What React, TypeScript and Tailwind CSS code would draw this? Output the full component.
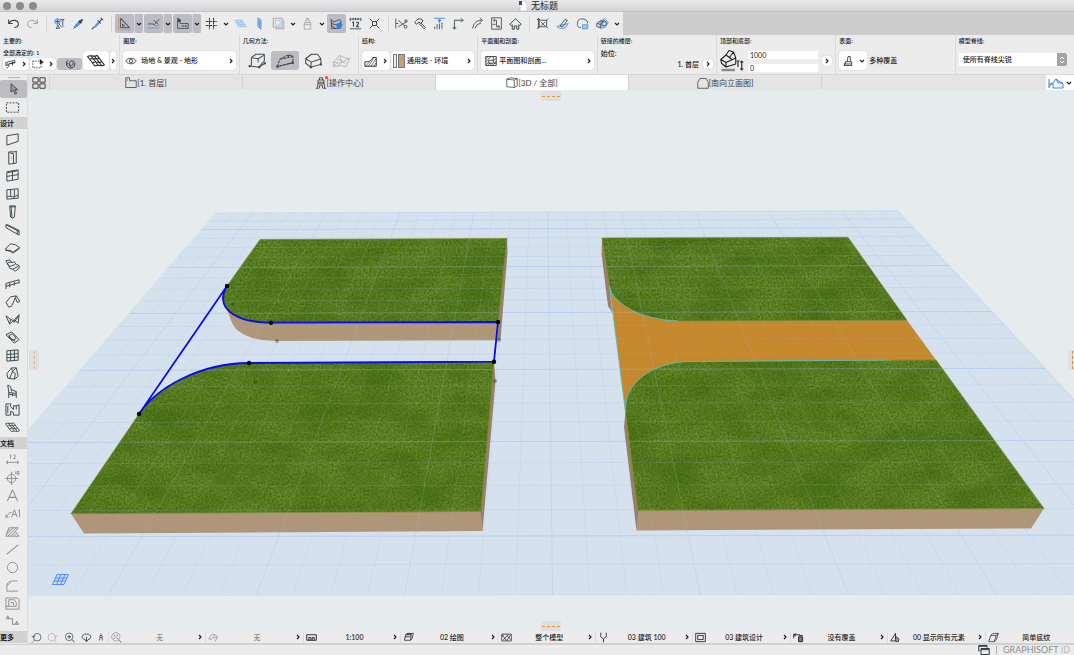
import React from "react";
import clsx from "clsx";

// Toolbar drawings, all on a 16x16 grid
const BLUE = "#4a90e2";

const ICONS: Record<string, React.ReactNode> = {
  undo: <path d="M2 3v5h5M2.500 7.500C5 3 13 3 14 8c.5 3-2 5-5 5" strokeWidth="1.300" />,
  redo: <path d="M14 3v5H9M13.500 7.500C11 3 3 3 2 8c-.5 3 2 5 5 5" strokeWidth="1.200" />,
  find: (
    <>
      <circle cx="5.500" cy="5.500" r="3.500" stroke={BLUE} fill="#b9d5f6" />
      <path d="M3 5.500h5M5.500 3v5M7 8l4 5M4 14l2-4 2 4zM9 3h5M12 3v8" />
      <path d="M12 12h2M10 5h3" stroke={BLUE} />
    </>
  ),
  dropper: (
    <>
      <path d="M3 13l1-3 5-5 2 2-5 5z" stroke={BLUE} fill={BLUE} />
      <path d="M8.500 4.500l3 3M10 6l3-3" strokeWidth="2.600" />
      <path d="M1.500 14.500l2-2" />
    </>
  ),
  syringe: (
    <>
      <path d="M3.500 12.500l5-6 1.500 1.500-5 5z" stroke={BLUE} fill={BLUE} />
      <path d="M8 4l4 4M9.500 7l4-4.500M12 1l3 3M1 15l2.500-2.500" strokeWidth="1.300" />
    </>
  ),
  guide: (
    <>
      <path d="M3 2v11h11z" />
      <path d="M5.500 8.500V11h2.500zM3 1l11 12" />
      <path d="M.8 1v14" stroke="#e3873c" strokeDasharray="2 1" />
      <path d="M2 15.300h13" stroke="#e3873c" />
    </>
  ),
  snapLine: (
    <>
      <path d="M1 8.500h6l2 1 6-7M8 4l6 5" />
      <path d="M1 13.500h14M10 10.500h5" stroke={BLUE} strokeDasharray="3 1" />
    </>
  ),
  ruler: (
    <>
      <path d="M2 1v13h13V8H5V5H2" />
      <path d="M3 2l3 2-3 2z" fill="currentColor" />
      <path d="M7 11h1M9 11h1M11 11h2" strokeWidth="2" />
    </>
  ),
  grid: <path d="M5.500 1v14M10.500 1v14M1 5.500h14M1 10.500h14" strokeWidth="1.300" strokeDasharray="3.500 .8" />,
  plane: (
    <g stroke="#7fb1ea" strokeWidth="0.800">
      <path d="M1 4h9l5 8H6z" fill="#dde9f8" />
      <path d="M4 4l5 8M7 4l5 8M3 7h9M4.500 9.500h9" />
    </g>
  ),
  planeV: (
    <g stroke={BLUE} strokeWidth="0.900">
      <path d="M6 1l4 3v11l-4-3z" fill="#a9cbf4" />
      <path d="M8 2.500v11M6 5l4 3M6 8l4 3" />
    </g>
  ),
  layers: (
    <>
      <path d="M1.500 1.500h11v11h-11z" />
      <path d="M4 14.500h10.500V4" />
      <path d="M4 4h6v6H4z" stroke="#9cc3ee" />
    </>
  ),
  lock: <path d="M4 7h8v8H4zM6 7V3.500h4V7M4 9.500h8M6 2h4" />,
  pick: (
    <>
      <path d="M1 3l4 3 7-3 2 3-6 4-6-2zM1 10l5 4h6M2 6v7M1 14h6" />
      <path d="M8 9l5-2 2 2-2 5-4-1z" fill="#2f7ff0" stroke="#2f7ff0" />
    </>
  ),
  measure: (
    <>
      <path d="M1 2.500h14M1.500 1v4M14.500 1v4M5 1v3M8 1v3M11 1v3M1 14.500h14" />
      <path d="M4 7l1.500-1v6M9 7.500c1-2 3.500-1 2.500 1L9 12h3.500" strokeWidth="1.300" />
    </>
  ),
  cross: <path d="M2 2l3.500 3.500M14 2l-3.500 3.500M2 14l3.500-3.500M14 14l-3.500-3.500M5.500 5.500h5v5h-5z" strokeWidth="1.200" />,
  scissors: (
    <>
      <path d="M1 2v12M1 8h3M4 4l8 7M4 12l10-6" />
      <circle cx="13" cy="12" r="1.800" />
      <circle cx="13.500" cy="5" r="1.500" />
    </>
  ),
  hammer: <path d="M1 7c2-4 5-6 9-4l1 2-3 3-2-2-3 3zM8 7l6 6-1.500 1.500L6 8" strokeWidth="1.200" />,
  height: (
    <>
      <path d="M1 1.500h14M8 3v5M6 5l2-2 2 2" stroke={BLUE} strokeWidth="1.400" />
      <path d="M5 9v6M8 9v6M11 7v8M2 12v3" strokeDasharray="1.800 .6" strokeWidth="1.300" />
    </>
  ),
  corner: <path d="M3 15V4h11M11 1.500L13.500 4 11 6.500M1 12.500L3 15l2-2.500" strokeWidth="1.100" />,
  fillet: <path d="M2 14C3 8 7 4 13 4M11 1l3 3-3 3M5 14c1-3 3-6 7-6" strokeWidth="1.100" />,
  stretch: <path d="M2 1h12v14H2zM5 4h3M5 2v4M8 4v8M8 12h4M10 10l2 2-2 2M3 9h4" />,
  roof: <path d="M1 9l7-7 7 7-2 1.500-1-1V15H9.500v-4h-3v4H4V9.500l-1 1z" strokeWidth="1.200" />,
  group: <path d="M4 4h9v8H4zM1 3h4M1 14l4-2M15 2l-3 3M15 14l-3-3M6 6l5 5M11 6l-5 5M3 1v13" />,
  paint: (
    <>
      <path d="M1 12c4-3 9-2 14-4l-3 5c-4 2-8 1-11-1z" stroke={BLUE} fill="#c7ddf7" />
      <path d="M5 11l6-8 3 1-6 8z" />
    </>
  ),
  cloud: (
    <>
      <path d="M6 13c-4 0-5-3-4-5-1-5 5-7 8-5 3 0 5 3 4 5" />
      <path d="M8 9.500h6.500v5H8z" stroke={BLUE} fill="#9fc6f5" />
    </>
  ),
  wheel: (
    <>
      <path d="M5 5l6-3 4 5-4 6-6 1z" stroke={BLUE} fill="#b9d5f6" />
      <circle cx="10" cy="8" r="3" />
      <path d="M1 8l4-3h5M1 8v4l5 1V9L1 8M6 9l3-3" />
    </>
  ),
  // info box
  wallTool: <path d="M1 6l12-3v3L5 8v4M1 6v4h2V7M5 8l9-2M10 5v5M2 13h2" />,
  select: (
    <>
      <path d="M1 4h11v9H1z" strokeDasharray="2 1.500" />
      <path d="M11 2v6l1.500-1.500L15 6z" fill="currentColor" />
    </>
  ),
  magnet: <path d="M5 3C0 9 6 15 11 13c5-2 4-9 0-9-4-1-5 5-2 6s4-3 2-4M6 9l4 4M3 6l3 2" />,
  mesh: (
    <g strokeWidth="0.900">
      <path d="M.5 4C4 2 6 5 9 3l6.500 8.500c-3 2-5-1-8.500 1z" />
      <path d="M3.500 3.300l6.500 8.500M6.500 3.600L13 12M2.500 6.500c3.500-2 5.500 1 8.500-1M4.800 9.500c3.500-2 5.500 1 8.500-1" />
    </g>
  ),
  eye: (
    <>
      <path d="M1 8c3-5 11-5 14 0-3 5-11 5-14 0z" />
      <circle cx="8" cy="8" r="2.300" />
    </>
  ),
  geo1: (
    <g strokeWidth="0.900">
      <path d="M3 5l4-3h7.500v6L10 13M3 5v7M3 5l6 1 5-3M9 6v3" />
      <path d="M1 12.500l9 1 5-3.500" />
      <path d="M1 12h1v1H1zM9.500 13h1v1h-1zM14.500 9.500h1v1h-1z" fill="currentColor" />
    </g>
  ),
  geo2: (
    <g strokeWidth="0.900">
      <path d="M1 13L3.500 6.500 11 2.500l4 1v6zM3.500 6.500L15 4M11 2.500v3" strokeDasharray="2.500 .7" />
      <path d="M1 13L15 9.500" />
      <path d="M.8 12.500h1v1h-1zM14.500 9h1v1h-1z" fill="currentColor" />
    </g>
  ),
  geo3: (
    <g strokeWidth="0.900">
      <path d="M1.500 6l5-4H12l3 4v5l-9 2.500L1.500 10zM1.500 6l5 3L15 6M6.500 9L6 13.500" />
      <path d="M5.500 13h1v1h-1zM14.500 10.500h1v1h-1z" fill="currentColor" />
    </g>
  ),
  geo4: <path d="M1 9l6-6 4 2 4.500 1-3 7-6-1-5 1zM1 9l6 1 8-4M7 10l-1 3M4 6l8 4M7 3l2 7M1 13l4-4" strokeWidth="0.800" />,
  section: (
    <>
      <path d="M1 14V9c4 0 8-1 9-5h4v10z" />
      <path d="M2 14l4-5M5 14l6-9M8 14l6-9M11 14l3-4" strokeWidth="0.700" />
    </>
  ),
  plan: <path d="M1 2h14v12H1zM1 5l3-3M1 9l7-7M1 13l4-4M5 7h6v4H5zM11 2v5M15 4l-4 4M15 8l-5 6M3 14l4-4M8 11v3M12 11h3" />,
  storey: (
    <g strokeWidth="0.700">
      <path d="M.5 7L4 4l2-3 3 1 1.500 4v4L4 12 1 9.500zM.5 7L4 9l6.500-3M4 9v3M4 4l4 3M9 2L6 6" />
      <path d="M1 14h9" stroke="#8a8a8a" strokeWidth="1.600" />
      <path d="M14.500 8v6M13.500 9l1-1 1 1M13.500 13l1 1 1-1M12 8v4M11 8h2" />
    </g>
  ),
  brush: <path d="M3 14h10V9H5zM3 14l2-5M5 12h8M7 9l1-7h3v7" />,
  // tabs
  tabs: <path d="M1 2h6v5H1zM9 2h6v5H9zM1 9h6v5H1zM9 9h6v5H9z" strokeWidth="1.100" />,
  folder: <path d="M1 14V1h5v4h9v9zM3 5V3" />,
  tower: <path d="M3 15l1-8h8l1 8M4 7V4h8v3M6 4V1h4v3M6 15v-4h4v4M4 9h8M1 15h4M11 15h4" strokeWidth="1.100" />,
  cube: <path d="M1 3l5-2 9 1v10l-4 2-10-1zM1 3l10 1 4-2M11 4v10" />,
  elevation: <path d="M1 7l3-5h8l3 5v8H1z" />,
  home: <path d="M1 4v9M1 9h3l4-5 7 5v4H5M8 4l2 4M1 12l3-4M5 13V8M10 8h5" stroke="#2f7ff0" />,
  // toolbox
  marquee: <path d="M1.500 3h13v10h-13z" strokeDasharray="2 1.300" />,
  wall: <path d="M2 4l12-2v8L2 14z" />,
  door: <path d="M4 2h7l1-1v13l-7 1H4zM5 3l4 1v10M6 8.500h1" />,
  window: <path d="M2 4l12-2v10L2 14zM8 3v10M2 9l12-2M3 5l10-2" />,
  opening: <path d="M2 4l12-1v10L2 14zM6 4v7l4 1V4M2 11h4M10 11l4-1" />,
  column: <path d="M5 2h6l-1 12-2 1-2-1zM5 3h6M6.500 3l1 12" />,
  beam: <path d="M1 3l14 7v4L1 6zM1 3l2 0 12 6v1M13 13V9" />,
  slab: <path d="M1 9l5-5 5 1 4.500 3-7 5-3-2-4.500 0zM1 9v2l4.500 1 3 2 7-5" />,
  stair: <path d="M1 3l4-1 2 3 3-1 2 3 3 1v3l-4 3-3-2-3-1-1-3zM3 5l4-1M5 9l6-2M8 12l6-3M2 6l3 3" />,
  railing: <path d="M1 14V8l14-4v4M1 11l14-4M5 7v5M10 6v4" />,
  roofTool: <path d="M1 9l5-6 6-1 4 6-3 1-2-5-4 9-3 1zM12 2l-1 3" />,
  shell: <path d="M1 4l5 4 3 1 6-6-1 9-3-3-3 1-3 3zM6 8l-1 4M9 9l1 2 5-8" />,
  skylight: <path d="M1 5l6-3 8 8-5 4zM4 6l4-2 4 5-4 2zM3 7l8 5" />,
  curtain: <path d="M2 3l12-1v11L2 14zM6 3v11M10 2v12M2 7l12-1M2 10.500l12-1" />,
  morph: <path d="M2 8l5-6 5 0 2 9-4 3-7-1zM7 2L8 6l3 2-1 6M12 2l-4 4M8 6L5 13" />,
  chair: <path d="M3 1l1 8 8 1V8L7 6M3 1l3 2 1 5M4 9v6M12 10v5M8 10v3M4 11l8 1" />,
  zone: <path d="M1 2h5v3l3 3V4h3l3-1v11H9v-3l-3-1v4H1zM3 4v8M12 4v4" />,
  dim: <path d="M1 11h14M2.500 9v4M13.500 9v4M5 3.500l1-.5v4M9 3.500c1-1 3 0 2 1.500L9 7h2.500" />,
  level: (
    <>
      <circle cx="7" cy="9" r="4.500" />
      <path d="M0 9h14M7 2v14M11.500 1.500v3M13 1.500h2v3h-2z" />
    </>
  ),
  letter: <path d="M2.500 14L8 2l5.500 12M4.500 10h7" strokeWidth="1.200" />,
  label: <path d="M1 12l4-5h2M1 9v3h3M7 12l3-8 3 8M8 9h4M14 5l1.500-1v8" />,
  hatch: (
    <>
      <path d="M1 13l3-9h10l-3 4 4 5z" />
      <path d="M2 11l7-7M3 13l9-9M6 13l5-5M9 13l3-3M2 9l4-4" />
    </>
  ),
  line: <path d="M2 13L14 3" strokeWidth="1.200" />,
  circle: <circle cx="8" cy="8" r="5.500" />,
  arc: <path d="M2 14V8c0-4 4-5 11-5M2 14h12M2 8l4-3" />,
  drawing: <path d="M1 2h12l2 2v10H1zM4 4h6l2 3v4H4zM6 7h3v3M1 11h3" />,
  worksheet: <path d="M1 5h7v6h7M1.500 5L3 2l1.500 3M11 11l1.500-3 1.500 3" strokeWidth="1.100" />,
  // status bar
  zoomPrev: (
    <>
      <circle cx="9" cy="7.500" r="5.500" />
      <path d="M5 12l-3 3M1 6l3 2 2-3" />
    </>
  ),
  zoomNext: (
    <>
      <circle cx="7" cy="7.500" r="5.500" />
      <path d="M11 12l3 3M10 6l3 2 2-3" />
    </>
  ),
  zoomIn: (
    <>
      <circle cx="7.500" cy="7" r="5.500" />
      <path d="M12 11l3 4M7.500 4.500v5M5 7h5" strokeWidth="1.300" />
    </>
  ),
  orbit: <path d="M6 11C0 10 0 3 8 3s8 7 2 8M8 7v7M5.500 11L8 14l2.500-3" strokeWidth="1.300" />,
  walk: <path d="M8 1v3M5 9l1-4h4l1 4M6 9h4M6 9l-1 6M10 9l1 6" strokeWidth="1.600" />,
  fit: (
    <>
      <circle cx="7" cy="7" r="6" />
      <path d="M11 11l4 4M4 4l2 2M10 4L8 6M4 10l2-2M10 10L8 8" strokeWidth="1.500" />
    </>
  ),
  angle: <path d="M1 10l5-7 4 1-5 7zM8 9l6-2-4 7M10 4l4 3" />,
  scale: <path d="M1 4h14v8H1zM4 12V8h3v4M9 12V8h3v4" strokeWidth="1.300" />,
  stack: <path d="M4 4l2-2h9l-2 8-2 2H2zM4 4h8l-1 8M3 7h8M5 3h8" strokeWidth="1.100" />,
  texture: <path d="M1 3h14v10H1zM1 7l4-4M3 12l8-9M8 13l6-9M2 5l6 7M8 4l6 7" />,
  pen: <path d="M4 1v6l4 3 4-3V1M8 10v5" strokeWidth="1.200" />,
  frame: <path d="M1 2h14v12H1zM4 5h8v6H4z" strokeWidth="1.200" />,
  override: <path d="M1 9V4h9M4 2L1 4l3 2M8 7h6v7H8zM10 7v7M12 7v7M9 5h5" strokeWidth="1.300" />,
  reno: <path d="M1 13L8 2v11zM8 6l5 4-1 4H8M10 8v5" strokeWidth="1.200" />,
  solid: <path d="M4 5l3-3h8l-3 9-3 3H1zM4 5h8l-3 9M12 5l3-3" />,
  windows: <path d="M1 2h11v3M1 2v7h2M4 6h11v8H4zM1 3h11M4 7.500h11" strokeWidth="1.300" />,
};

type IconProps = { name: string; className?: string };

const Icon = ({ name, className = "size-4" }: IconProps) => (
  <svg
    viewBox="0 0 16 16"
    fill="none"
    stroke="currentColor"
    strokeLinejoin="round"
    className={clsx("shrink-0", className)}
    aria-hidden="true"
  >
    {ICONS[name]}
  </svg>
);

const Chevron = ({ down = false }: { down?: boolean }) => (
  <svg
    viewBox="0 0 6 6"
    fill="none"
    stroke="#222"
    strokeWidth="1.200"
    className="size-1.5 shrink-0"
    aria-hidden="true"
  >
    <path d={down ? "M1 2L3 4 5 2" : "M2 1L4 3 2 5"} />
  </svg>
);

// Main toolbar
type Tool = {
  icon: string;
  label: string;
  active?: boolean;
  menu?: boolean;
  dim?: boolean;
};

const TOOL_GROUPS: Tool[][] = [
  [
    { icon: "undo", label: "撤销" },
    { icon: "redo", label: "重做", dim: true },
  ],
  [
    { icon: "find", label: "查找和选择" },
    { icon: "dropper", label: "拾取参数" },
    { icon: "syringe", label: "注入参数" },
  ],
  [
    { icon: "guide", label: "辅助线", active: true, menu: true },
    { icon: "snapLine", label: "捕捉导线", active: true, menu: true },
    { icon: "ruler", label: "追踪器", active: true, menu: true },
    { icon: "grid", label: "网格", menu: true },
    { icon: "plane", label: "编辑平面" },
    { icon: "planeV", label: "垂直平面" },
    { icon: "layers", label: "描绘", menu: true, dim: true },
    { icon: "lock", label: "锁定", menu: true, dim: true },
    { icon: "pick", label: "编组", active: true },
    { icon: "measure", label: "测量" },
    { icon: "cross", label: "分解" },
  ],
  [
    { icon: "scissors", label: "分割" },
    { icon: "hammer", label: "调整" },
    { icon: "height", label: "标高" },
    { icon: "corner", label: "相交" },
    { icon: "fillet", label: "圆角" },
    { icon: "stretch", label: "拉伸" },
    { icon: "roof", label: "修剪到屋顶" },
  ],
  [
    { icon: "group", label: "变换" },
    { icon: "paint", label: "表面画笔" },
    { icon: "cloud", label: "点云" },
    { icon: "wheel", label: "三维样式", menu: true },
  ],
];

const Toolbar = () => (
  <div className="flex h-[23px] shrink-0 bg-[#cdcdcd]">
    <div className="flex items-center bg-[#ececec] pr-px pl-1">
      {TOOL_GROUPS.map((group, i) => (
        <React.Fragment key={group[0].icon}>
          {i > 0 && (
            <div className="flex w-2 justify-center">
              <div className="h-4 w-px bg-[#d6d6d6]" />
            </div>
          )}
          <div className={clsx("flex", i === 4 && "gap-px")}>
            {group.map((tool) => (
              <div key={tool.icon} className="flex h-[19px]">
                <button
                  aria-label={tool.label}
                  className={clsx(
                    "flex w-[19px] items-center justify-center rounded-xs",
                    tool.active && "bg-[#bcbcc2]",
                    tool.dim ? "text-[#9aa0a4]" : "text-[#36444b]",
                  )}
                >
                  <Icon name={tool.icon} className="size-[13px]" />
                </button>
                {tool.menu && (
                  <button
                    aria-label={`${tool.label}选项`}
                    className={clsx(
                      "flex w-2.5 items-center justify-center rounded-xs",
                      tool.active && "border-x border-l-[#d2d2d6] border-r-[#ececec] bg-[#bcbcc2]",
                    )}
                  >
                    <Chevron down />
                  </button>
                )}
              </div>
            ))}
          </div>
        </React.Fragment>
      ))}
    </div>
  </div>
);

// Info box
const WHITE_BTN =
  "flex items-center rounded-[3px] bg-white shadow-[0_0_1px_#9a9a9a]";

const Section = ({
  title,
  children,
}: {
  title: string;
  children: React.ReactNode;
}) => (
  <section className="flex min-w-0 flex-col border-l border-[#dadada] px-[3px] first:border-l-0">
    <h2 className="h-2.5 pt-px text-[6px] leading-[9px] font-medium">{title}</h2>
    {children}
  </section>
);

const InfoBox = () => (
  <div className="grid h-10 shrink-0 grid-cols-9 border-b border-[#d8d8d8] bg-[#ececec]">
    <Section title="主要的:">
      <p className="h-1.5 pt-1 text-[6px] leading-[7px] font-medium whitespace-nowrap">
        全部选定的: 1
      </p>
      <div className="flex items-end gap-px">
        <button aria-label="默认设置" className={clsx(WHITE_BTN, "h-3 flex-1 justify-around")}>
          <Icon name="wallTool" className="size-3" />
          <Chevron />
        </button>
        <button aria-label="选择方法" className={clsx(WHITE_BTN, "h-3 flex-1 justify-around")}>
          <Icon name="select" className="size-3" />
          <Chevron />
        </button>
        <button
          aria-label="磁性"
          className="flex h-3 flex-1 items-center justify-center rounded-[3px] bg-[#bcbcc2]"
        >
          <Icon name="magnet" className="size-3" />
        </button>
        <button aria-label="网面设置" className={clsx(WHITE_BTN, "h-[19px] flex-1 justify-center")}>
          <Icon name="mesh" className="size-[18px]" />
        </button>
        <button aria-label="收藏夹" className={clsx(WHITE_BTN, "h-[19px] w-1.5 justify-center")}>
          <Chevron />
        </button>
      </div>
    </Section>
    <Section title="图层:">
      <button className={clsx(WHITE_BTN, "mt-1.5 h-[19px] gap-1 px-0.5 text-[7px] font-medium")}>
        <Icon name="eye" className="size-3" />
        <span className="flex-1 text-left">场地 &amp; 景观 - 地形</span>
        <Chevron />
      </button>
    </Section>
    <Section title="几何方法:">
      <div className="mt-1.5 flex h-[19px] text-[#3f4a50]">
        {["geo1", "geo2", "geo3", "geo4"].map((name, i) => (
          <button
            key={name}
            aria-label={`几何方法 ${i + 1}`}
            className={clsx(
              "flex w-7 items-center justify-center rounded-[3px]",
              i === 1 && "bg-[#bcbcc2]",
              i === 3 && "text-[#b3b3b3]",
            )}
          >
            <Icon name={name} className="size-[18px]" />
          </button>
        ))}
      </div>
    </Section>
    <Section title="结构:">
      <div className="mt-1.5 flex h-[19px] gap-px">
        <button aria-label="结构类型" className={clsx(WHITE_BTN, "w-7 justify-around")}>
          <Icon name="section" className="size-3.5" />
          <Chevron />
        </button>
        <button className={clsx(WHITE_BTN, "flex-1 gap-0.5 px-0.5 text-[7px] font-medium")}>
          <span className="flex h-3.5 w-3 gap-px">
            <span className="w-1 border border-[#777] bg-[#f4efe6]" />
            <span className="flex-1 border border-[#777] bg-[#c2a078]" />
          </span>
          <span className="flex-1 text-left whitespace-nowrap">通用类 - 环境</span>
          <Chevron />
        </button>
      </div>
    </Section>
    <Section title="平面图和剖面:">
      <button className={clsx(WHITE_BTN, "mt-1.5 h-[19px] gap-0.5 pr-0.5 pl-1 text-[7px] font-medium")}>
        <Icon name="plan" className="size-3" />
        <span className="flex-1 text-left">平面图和剖面...</span>
        <Chevron />
      </button>
    </Section>
    <Section title="链接的楼层:">
      <p className="pt-1 text-[7px] leading-[8px] font-medium">始位:</p>
      <div className="mt-0.5 flex items-center justify-end gap-1 text-[7px] font-medium">
        <span>1. 首层</span>
        <button aria-label="选择楼层" className={clsx(WHITE_BTN, "size-2.5 justify-center")}>
          <Chevron />
        </button>
      </div>
    </Section>
    <Section title="顶部和底部:">
      <div className="mt-1 flex items-center gap-1">
        <Icon name="storey" className="size-6" />
        <div className="flex min-w-0 flex-1 flex-col gap-[5px]">
          <input
            aria-label="顶部高度"
            defaultValue="1000"
            className="h-2 w-full bg-white px-0.5 text-[7px] leading-[8px]"
          />
          <input
            aria-label="底部高度"
            defaultValue="0"
            className="h-2 w-full bg-white px-0.5 text-[7px] leading-[8px]"
          />
        </div>
        <button aria-label="更多高度" className={clsx(WHITE_BTN, "size-2.5 justify-center")}>
          <Chevron />
        </button>
      </div>
    </Section>
    <Section title="表面:">
      <div className="mt-1.5 flex h-[19px] items-center gap-0.5 text-[7px] font-medium">
        <button aria-label="表面覆盖" className={clsx(WHITE_BTN, "h-full w-7 justify-around")}>
          <Icon name="brush" className="size-3" />
          <Chevron down />
        </button>
        多种覆盖
      </div>
    </Section>
    <Section title="模型脊线:">
      <div className="mt-2 mr-1 flex h-[13px] items-stretch bg-white">
        <select
          aria-label="模型脊线"
          className="min-w-0 flex-1 appearance-none bg-transparent pl-1 text-[7px] leading-[13px] font-medium"
        >
          <option>使所有脊线尖锐</option>
        </select>
        <span className="flex w-2.5 items-center justify-center rounded-r-xs bg-[#a3a3a8]">
          <svg viewBox="0 0 8 10" className="h-2.5 w-2" fill="none" stroke="#fff" aria-hidden="true">
            <path d="M2 4l2-2 2 2M2 6l2 2 2-2" />
          </svg>
        </span>
      </div>
    </Section>
  </div>
);

// Left toolbox
const DESIGN_TOOLS = [
  "wall", "door", "window", "opening", "column", "beam", "slab", "stair", "railing",
  "roofTool", "shell", "skylight", "curtain", "morph", "chair", "zone", "mesh",
];

const DOC_TOOLS = [
  "dim", "level", "letter", "label", "hatch", "line", "circle", "arc", "drawing", "worksheet",
];

const ToolHeading = ({ children }: { children: React.ReactNode }) => (
  <h3 className="my-px h-3 bg-[#d2d2d2] text-[7px] leading-[12px] font-bold">{children}</h3>
);

const ToolButton = ({ name, dim }: { name: string; dim?: boolean }) => (
  <button
    aria-label={name}
    className={clsx(
      "flex h-[18px] items-center justify-center pr-0.5",
      dim ? "text-[#8b8f91]" : "text-[#36444b]",
    )}
  >
    <Icon name={name} className="size-[15px]" />
  </button>
);

const Toolbox = () => (
  <aside className="flex w-7 shrink-0 flex-col border-r border-[#dcdcdc] bg-[#ececec]">
    <div className="flex h-[5px] items-center justify-center">
      <div className="h-px w-3 bg-[#b5b5b5]" />
    </div>
    <button
      aria-label="箭头"
      className="flex h-[18px] items-center justify-center rounded-xs bg-[#bcbcc2]"
    >
      <svg viewBox="0 0 12 16" className="h-3 w-2.5" fill="#9b9b9f" stroke="#333" aria-hidden="true">
        <path d="M2 1v11l3-2.500L7.500 15l2-1L7.500 9H11z" />
      </svg>
    </button>
    <ToolButton name="marquee" />
    <ToolHeading>设计</ToolHeading>
    {DESIGN_TOOLS.map((name) => (
      <ToolButton key={name} name={name} />
    ))}
    <ToolHeading>文档</ToolHeading>
    {DOC_TOOLS.map((name) => (
      <ToolButton key={name} name={name} dim />
    ))}
    <ToolHeading>更多</ToolHeading>
  </aside>
);

// View tabs
const TABS = [
  { icon: "folder", title: "[1. 首层]" },
  { icon: "tower", title: "[操作中心]", badge: true },
  { icon: "cube", title: "[3D / 全部]", active: true },
  { icon: "elevation", title: "[南向立面图]" },
];

const TabBar = () => (
  <nav className="flex h-[15px] shrink-0 bg-[#e4e4e4] text-[8px] text-[#3c3c3c]">
    <button aria-label="标签概览" className="flex w-[21px] items-center justify-center">
      <Icon name="tabs" className="size-3.5" />
    </button>
    {TABS.map((tab) => (
      <button
        key={tab.title}
        className={clsx(
          "flex w-[193px] items-center justify-center border-l border-[#d4d4d4]",
          tab.active && "bg-white",
        )}
      >
        <span className="relative">
          <Icon name={tab.icon} className="size-3" />
          {tab.badge && (
            <span className="absolute -top-px -right-px size-[3px] rounded-full bg-[#ff3b20]" />
          )}
        </span>
        {tab.title}
      </button>
    ))}
    <div className="flex-1 border-l border-[#d4d4d4]" />
    <button aria-label="视图选项" className="flex w-7 items-center justify-center gap-0.5 bg-white">
      <Icon name="home" className="size-4" />
      <Chevron down />
    </button>
  </nav>
);

// Ground grid: lines converge at VANISH, rows are spaced by inverse depth
const VANISH = { x: 543, y: -168 };
const ROWS = 24;
const COLS = 37;
const TOP = 212;
const BOTTOM = 595;

const rowY = (k: number) => {
  const near = 1 / (TOP - VANISH.y);
  const far = 1 / (BOTTOM - VANISH.y);
  return VANISH.y + 1 / (near - ((near - far) * k) / ROWS);
};

const columnX = (k: number, y: number) => {
  const topX = 216 + (682 * k) / COLS;
  return VANISH.x + ((topX - VANISH.x) * (y - VANISH.y)) / (TOP - VANISH.y);
};

const Grid = ({ opacity = 1 }: { opacity?: number }) => (
  <g stroke="#a3c0f0" opacity={opacity}>
    {Array.from({ length: ROWS + 1 }, (_, k) => {
      const y = rowY(k);
      return (
        <line
          key={`r${k}`}
          x1={columnX(0, y)}
          y1={y + 1}
          x2={columnX(COLS, y)}
          y2={y - 1}
          strokeWidth={0.8}
          opacity={k % 4 === 2 ? 0.7 : 0.3}
        />
      );
    })}
    {Array.from({ length: COLS + 1 }, (_, k) => (
      <line
        key={`c${k}`}
        x1={columnX(k, TOP)}
        y1={TOP}
        x2={columnX(k, BOTTOM)}
        y2={BOTTOM}
        strokeWidth={0.8}
        opacity={k % 4 === 2 ? 0.45 : 0.25}
      />
    ))}
  </g>
);

const GRASS = [
  "M260 239.500L507 238.500 498.300 322 271 322.700C254 322.700 239 319 230 312 222 305 221 296 227 286z",
  "M139 414C156 388 200 363 249 363L494 361.700 481 511.500 71 513.700z",
  "M602 238L848 237.300 907 320.300 678 321C640 320 612 303 609.500 286z",
  "M690 361.500L936 360 1044 508.500 638 510.500 625.500 412C623 385 650 362 690 361.500z",
];

const SOIL = [
  "M227 309L232 323C238 335 255 341 277 341L498 340.300 498.300 321 271 322z",
  "M71 513.700L481 511.500 482.500 531 84 533.500z",
  "M638 510.500L1044 508.500 1031 528.500 636.500 530.500z",
];

const SOIL_SIDES = [
  "M507 238.500L507.500 252 500.500 340 498 340 498.300 322z",
  "M494 361.700L495.500 381 482.500 531 480.500 511.500z",
  "M602 238L601.500 254 608 306 612 312 609.500 286z",
  "M625.500 412L624 427 636.500 530.500 638.500 510.500z",
];

const NODES = [
  [227, 286], [271, 322.7], [498, 322], [494, 361.7], [249, 363], [139, 414],
];

const HIDDEN_NODES = [[277, 341], [255, 382], [233, 304], [499, 340], [495, 381]];

const Scene = () => (
  <svg
    viewBox="28 90 1046 541"
    preserveAspectRatio="xMidYMid slice"
    className="absolute inset-0 size-full"
    role="img"
    aria-label="3D 地形"
  >
    <defs>
      <filter id="grass" x="0" y="0" width="1" height="1" colorInterpolationFilters="sRGB">
        <feTurbulence type="fractalNoise" baseFrequency="0.500" numOctaves="2" seed="4" />
        <feColorMatrix
          values="0.260 0 0 0 0.220  0.260 0 0 0 0.360  0.200 0 0 0 0.030  0 0 0 0 1"
          result="blades"
        />
        <feTurbulence type="fractalNoise" baseFrequency="0.020 0.040" numOctaves="3" seed="9" />
        <feColorMatrix
          values="0 0 0 0 0.200  0 0 0 0 0.360  0 0 0 0 0.020  0.900 0 0 0 -0.300"
          result="patches"
        />
        <feMerge result="lawn">
          <feMergeNode in="blades" />
          <feMergeNode in="patches" />
        </feMerge>
        <feComposite in="lawn" in2="SourceGraphic" operator="in" />
      </filter>
      <clipPath id="solids">
        {[...GRASS, ...SOIL].map((d) => (
          <path key={d} d={d} />
        ))}
        <path d="M609.500 286L678 321 907 320.300 936 360 690 361.500 625.500 412z" />
      </clipPath>
    </defs>

    <path d="M216 213L898 210 1258 595-114 595z" fill="#d6e1ee" />
    <Grid />

    {SOIL.map((d) => (
      <path key={d} d={d} fill="#b09678" />
    ))}
    {SOIL_SIDES.map((d) => (
      <path key={d} d={d} fill="#97806a" />
    ))}
    <path
      d="M609.500 286C612 303 640 320 678 321L907 320.300 936 360 690 361.500C650 362 623 385 625.500 412z"
      fill="#c5882c"
    />
    {GRASS.map((d) => (
      <g key={d}>
        <path d={d} fill="#587c22" filter="url(#grass)" />
        <path d={d} fill="none" stroke="#7d862a" strokeWidth="0.700" />
      </g>
    ))}
    <g clipPath="url(#solids)">
      <g style={{ mixBlendMode: "multiply" }}>
        <Grid opacity={0.6} />
      </g>
    </g>
    <path
      d="M678 321C640 320 612 303 609.500 286L625.500 412C623 385 650 362 690 361.500L890 360"
      fill="none"
      stroke="#66b8ae"
    />

    {HIDDEN_NODES.map(([x, y]) => (
      <circle key={`${x}-${y}`} cx={x} cy={y} r="2" fill="#222" opacity="0.350" />
    ))}
    <path
      d="M227 286C221 296 222 305 230 312 239 319 254 322.700 271 322.700L498 322 494 361.700 249 363C200 363 156 388 139 414z"
      fill="none"
      stroke="#0a0af0"
      strokeWidth="1.800"
    />
    {NODES.map(([x, y]) => (
      <circle key={`${x}-${y}`} cx={x} cy={y} r="2.200" fill="#000" />
    ))}

    {/* edit plane marker */}
    <path
      d="M57 574.500H68.500L64 584.500H52.500zM61 574.500L56.500 584.500M65 574.500L60.500 584.500M55.500 578H67M54 581H65.500"
      fill="#c6d9fa"
      stroke="#3f78f0"
      strokeWidth="0.800"
    />
  </svg>
);

const Viewport = () => (
  <main className="relative min-h-0 flex-1 overflow-hidden bg-[#e6ebed]">
    <Scene />
    <div className="absolute top-px left-1/2 flex h-2.5 w-5 -translate-x-1/2 items-center rounded-xs bg-[#dce0e1] px-px">
      <div className="w-full border-t border-dashed border-[#f0953e]" />
    </div>
    <div className="absolute bottom-0 left-1/2 flex h-2.5 w-5 -translate-x-1/2 items-center rounded-xs bg-[#dce0e1] px-px">
      <div className="w-full border-t border-dashed border-[#f0953e]" />
    </div>
    <div className="absolute top-[260px] left-px flex h-5 w-2.5 justify-center rounded-xs bg-[#dce0e1] py-px">
      <div className="h-full border-l border-dashed border-[#f3b07a]" />
    </div>
    <div className="absolute top-[260px] right-0 flex h-5 w-1.5 justify-end rounded-l-xs bg-[#dce0e1] py-px pr-px">
      <div className="h-full border-l border-dashed border-[#f58220]" />
    </div>
  </main>
);

// Quick options at the bottom
const QUICK_OPTIONS = [
  { icon: "", text: "无", dim: true },
  { icon: "angle", text: "无", dim: true },
  { icon: "scale", text: "1:100" },
  { icon: "stack", text: "02 绘图" },
  { icon: "texture", text: "整个模型" },
  { icon: "pen", text: "03 建筑 100" },
  { icon: "frame", text: "03 建筑设计" },
  { icon: "override", text: "没有覆盖" },
  { icon: "reno", text: "00 显示所有元素" },
  { icon: "solid", text: "简单底纹" },
];

const NAV_ICONS = ["zoomPrev", "zoomNext", "zoomIn", "orbit", "walk"];

const QuickOptions = () => (
  <div className="flex h-[13px] shrink-0 overflow-hidden border-b border-[#cfcfcf] bg-[#ececec]">
    <div className="flex w-20 shrink-0 items-center justify-around">
      {NAV_ICONS.map((name) => (
        <button
          key={name}
          aria-label={name}
          className={name === "zoomNext" ? "text-[#aaa]" : "text-[#36444b]"}
        >
          <Icon name={name} className={name === "walk" ? "size-2" : "size-[11px]"} />
        </button>
      ))}
    </div>
    <div className="-mr-2 grid flex-1 grid-cols-10">
      {QUICK_OPTIONS.map((option, i) => (
        <button
          key={i}
          className={clsx(
            "flex items-center border-l border-[#dcdcdc] px-0.5 text-[7px] font-medium",
            option.dim && "text-[#8a8a8a]",
          )}
        >
          <Icon name={option.icon || "fit"} className="size-[11px]" />
          <span className="flex-1 whitespace-nowrap">{option.text}</span>
          <Chevron />
        </button>
      ))}
    </div>
  </div>
);

export default function App() {
  return (
    <div className="flex h-screen min-h-[640px] flex-col overflow-hidden bg-[#ececec] font-['Lato','Noto_Sans_CJK_SC',sans-serif] text-[#1c1c1c]">
      <header className="flex h-3 shrink-0 items-center border-b border-[#c4c2c4] bg-linear-to-b from-[#ebe9eb] to-[#d6d3d6]">
        <div className="flex flex-1 gap-[5px] pl-[3px]">
          <span className="size-2 rounded-full bg-[#8d8b8d]" />
          <span className="size-2 rounded-full bg-[#8d8b8d]" />
          <span className="size-2 rounded-full bg-[#8d8b8d]" />
        </div>
        <h1 className="flex items-center gap-1 text-[9px] leading-[10px]">
          <svg viewBox="0 0 8 10" className="h-2.5 w-2" aria-hidden="true">
            <path d="M1 0h4l3 3v7H1z" fill="#fff" stroke="#aaa" strokeWidth="0.500" />
            <path d="M0 0h3v4H0z" fill="#31507e" />
          </svg>
          无标题
        </h1>
        <div className="flex-1" />
      </header>
      <Toolbar />
      <InfoBox />
      <div className="flex min-h-0 flex-1">
        <Toolbox />
        <div className="flex min-w-0 flex-1 flex-col">
          <TabBar />
          <Viewport />
          <QuickOptions />
        </div>
      </div>
      <footer className="flex h-[11px] shrink-0 items-center justify-end gap-1.5 border-t border-[#d2d2d2] pr-1 text-[9px] leading-[10px] text-[#8e8e8e]">
        <Icon name="windows" className="size-3 text-[#2c383e]" />
        <span className="h-2 w-px bg-[#aaa]" />
        <span>
          GRAPHISOFT <span className="text-[#bcbcbc]">ID</span>
        </span>
      </footer>
    </div>
  );
}
